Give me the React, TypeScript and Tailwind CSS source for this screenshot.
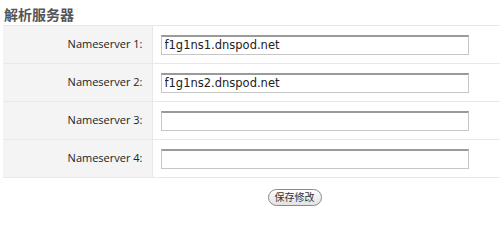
import React from 'react';

const servers = ['f1g1ns1.dnspod.net', 'f1g1ns2.dnspod.net', '', ''];

export default function App() {
  return (
    <div
      className="w-[500px] h-[214px] bg-white pl-[3px] pt-[5px] text-[#333]"
      style={{ fontFamily: '"Lucida Grande", "DejaVu Sans", "Noto Sans CJK SC", sans-serif' }}
    >
      <h3 className="h-[20px] pl-[1px] text-[14px] font-bold leading-[20px] text-[#555]">解析服务器</h3>
      <table className="w-[497px] border-collapse">
        <tbody>
          {servers.map((value, i) => (
            <tr key={i} className="h-[38px] border-y border-[#e8e8e8]">
              <td
                className="w-[149px] bg-[#f4f4f4] pr-[9px] text-right text-[11px] text-[#222] border-r border-[#e8e8e8]"
                style={{ fontFamily: '"Open Sans", "DejaVu Sans", sans-serif' }}
              >
                Nameserver {i + 1}:
              </td>
              <td className="pl-[8px]">
                <input
                  type="text"
                  defaultValue={value}
                  className="block h-[20px] w-[308px] border border-[#c6c6c6] border-t-[2px] border-t-[#9a9a9a] bg-white px-[3px] text-[11.5px] text-[#222] outline-none"
                  style={{ fontFamily: '"DejaVu Sans", sans-serif' }}
                />
              </td>
            </tr>
          ))}
        </tbody>
      </table>
      <div className="flex justify-center pt-[11px] pl-[86px]">
        <button className="h-[17px] rounded-full border border-[#8a8a8a] bg-gradient-to-b from-white to-[#e2e2e2] px-[6px] text-[10px] leading-[15px] text-[#333]">
          保存修改
        </button>
      </div>
    </div>
  );
}
